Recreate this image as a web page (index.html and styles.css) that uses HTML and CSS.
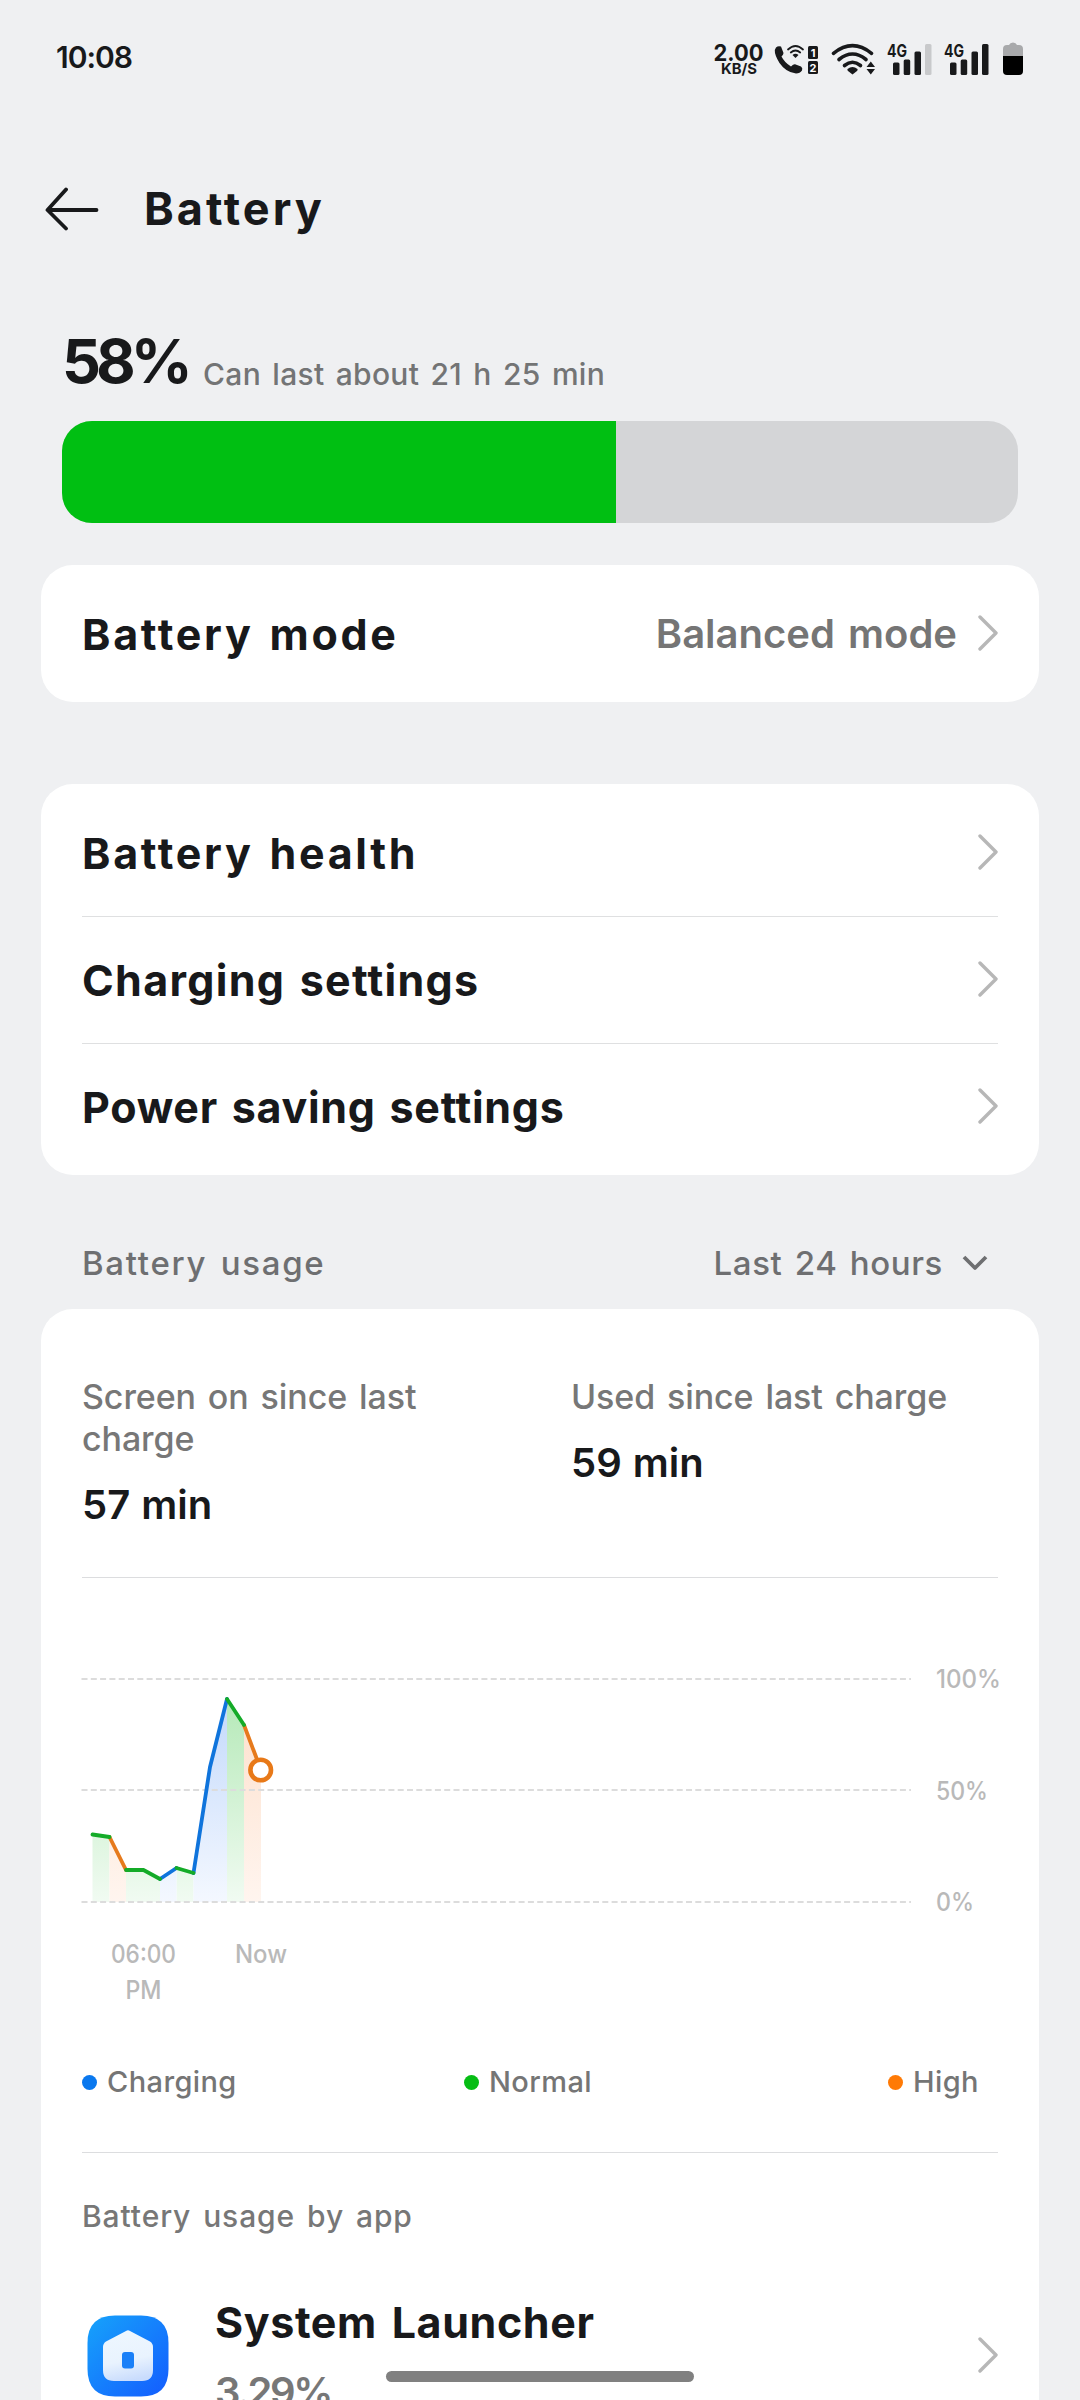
FILE: index.html
```html
<!DOCTYPE html>
<html lang="en">
<head>
    <meta charset="UTF-8">
    <meta name="viewport" content="width=device-width, initial-scale=1.0">
    <title>Battery</title>
    <link rel="stylesheet" href="styles.css">
</head>
<body>
    <div class="screen">
        <div class="status-bar">
            <div class="clock">10:08</div>
            <svg class="status-icons" width="320" height="40" viewBox="710 40 320 40" fill="#18191b">
                <!-- network speed -->
                <text x="738.5" y="60.5" class="speed" text-anchor="middle" textLength="50" lengthAdjust="spacingAndGlyphs">2.00</text>
                <text x="739" y="74" class="speed-unit" text-anchor="middle" textLength="36" lengthAdjust="spacingAndGlyphs">KB/S</text>
                <!-- wifi calling -->
                <path d="M776 47.500Q778 45.500 781 46.500L783.500 53Q783.500 54.500 781.500 56.500Q784.500 62.500 791 66.500Q793.500 64 795 64.300L801 66.500Q803 68 802 70.500Q800 73.500 796 73.500Q786 72.500 779.500 63Q774.500 55 774.800 50Z"/>
                <g fill="none" stroke="#18191b" stroke-width="1.800" stroke-linecap="round">
                    <path d="M788 49.500Q795.500 42.500 803 49.500"/>
                    <path d="M790.800 52.500Q795.500 48.500 800.200 52.500"/>
                </g>
                <path d="M792.500 55Q795.500 52.500 798.500 55L795.500 58Z"/>
                <rect x="808" y="46" width="10" height="13" rx="1.500"/>
                <rect x="808" y="61" width="10" height="13" rx="1.500"/>
                <text x="813" y="56.500" class="sim" text-anchor="middle">1</text>
                <text x="813" y="71.700" class="sim" text-anchor="middle">2</text>
                <!-- wifi -->
                <g fill="none" stroke="#18191b" stroke-width="3.600" stroke-linecap="round">
                    <path d="M833.500 53.300Q852.500 38 871.500 53.300"/>
                    <path d="M839 59.500Q852.500 48.500 866 59.500"/>
                    <path d="M844.500 65.500Q852.500 59 860.500 65.500"/>
                </g>
                <path d="M847.500 69Q852.500 65 857.500 69Q858 70 857 71L852.500 74.500L848 71Q847 70 847.500 69Z"/>
                <path d="M866.500 67L870.800 61.500L875 67ZM866.500 69L870.800 74.500L875 69Z"/>
                <!-- sim 1 signal -->
                <text x="887" y="57" class="net" textLength="20" lengthAdjust="spacingAndGlyphs">4G</text>
                <rect x="893" y="62.500" width="6.500" height="12.500" rx="1.500"/>
                <rect x="903.700" y="59.500" width="6.500" height="15.500" rx="1.500"/>
                <rect x="914.500" y="51.500" width="6.500" height="23.500" rx="1.500"/>
                <rect x="925" y="44" width="6.500" height="31" rx="1.500" fill="#c8c9cb"/>
                <!-- sim 2 signal -->
                <text x="944" y="57" class="net" textLength="20" lengthAdjust="spacingAndGlyphs">4G</text>
                <rect x="950" y="62.500" width="6.500" height="12.500" rx="1.500"/>
                <rect x="960.700" y="59.500" width="6.500" height="15.500" rx="1.500"/>
                <rect x="971.500" y="51.500" width="6.500" height="23.500" rx="1.500"/>
                <rect x="982" y="44" width="6.500" height="31" rx="1.500"/>
                <!-- battery -->
                <path d="M1003 56V49Q1003 45 1007 45H1009Q1010 42.500 1013 42.500Q1016 42.500 1017 45H1019Q1023 45 1023 49V56Z" fill="#a8a9ab"/>
                <path d="M1003 56H1023V71Q1023 75 1019 75H1007Q1003 75 1003 71Z" fill="#000"/>
            </svg>
        </div>

        <div class="header">
            <svg class="back" width="54" height="48" viewBox="0 0 54 48">
                <path d="M21 5.500L2.500 26L21 44.500M3 26H51.500"/>
            </svg>
            <h1>Battery</h1>
        </div>

        <div class="summary">
            <div class="level">
                <span class="percent">58%</span>
                <span class="remaining">Can last about 21 h 25 min</span>
            </div>
            <div class="meter"><div class="meter-fill" style="width: 58%"></div></div>
        </div>

        <div class="card mode-card">
            <div class="row">
                <span class="row-title">Battery mode</span>
                <span class="row-value">Balanced mode</span>
                <svg class="chevron" width="20" height="36" viewBox="0 0 20 36"><path d="M2 2L18 18L2 34"/></svg>
            </div>
        </div>

        <div class="card menu-card">
            <div class="row">
                <span class="row-title">Battery health</span>
                <svg class="chevron" width="20" height="36" viewBox="0 0 20 36"><path d="M2 2L18 18L2 34"/></svg>
            </div>
            <div class="row">
                <span class="row-title medium">Charging settings</span>
                <svg class="chevron" width="20" height="36" viewBox="0 0 20 36"><path d="M2 2L18 18L2 34"/></svg>
            </div>
            <div class="row">
                <span class="row-title tight">Power saving settings</span>
                <svg class="chevron" width="20" height="36" viewBox="0 0 20 36"><path d="M2 2L18 18L2 34"/></svg>
            </div>
        </div>

        <div class="section-head">
            <span class="section-title">Battery usage</span>
            <span class="range">Last 24 hours</span>
            <svg class="down" width="28" height="18" viewBox="0 0 28 18"><path d="M3 3L14 14L25 3"/></svg>
        </div>

        <div class="card usage-card">
            <div class="stats">
                <div class="stat">
                    <div class="stat-label">Screen on since last<br>charge</div>
                    <div class="stat-value">57 min</div>
                </div>
                <div class="stat">
                    <div class="stat-label">Used since last charge</div>
                    <div class="stat-value">59 min</div>
                </div>
            </div>

            <svg class="chart" width="924" height="484" viewBox="81 1578 924 484">
                <defs>
                    <linearGradient id="fillBlue" gradientUnits="userSpaceOnUse" x1="0" y1="1699" x2="0" y2="1902">
                        <stop offset="0" stop-color="#c3d9fb"/>
                        <stop offset="1" stop-color="#f4f8ff"/>
                    </linearGradient>
                    <linearGradient id="fillGreen" gradientUnits="userSpaceOnUse" x1="0" y1="1699" x2="0" y2="1902">
                        <stop offset="0" stop-color="#b5e9b8"/>
                        <stop offset="1" stop-color="#f1fbf2"/>
                    </linearGradient>
                    <linearGradient id="fillOrange" gradientUnits="userSpaceOnUse" x1="0" y1="1699" x2="0" y2="1902">
                        <stop offset="0" stop-color="#fde0cc"/>
                        <stop offset="1" stop-color="#fff5ef"/>
                    </linearGradient>
                </defs>
                <!-- area under the line -->
                <path fill="url(#fillGreen)" d="M92.500 1834.500L109.500 1837V1902H92.500ZM126 1870H143.500L160 1879V1902H126ZM176.500 1868L193.500 1873V1902H176.500ZM227 1699L244 1725V1902H227Z"/>
                <path fill="url(#fillOrange)" d="M109.500 1837L126 1870V1902H109.500ZM244 1725L261 1770V1902H244Z"/>
                <path fill="url(#fillBlue)" d="M160 1879L176.500 1868V1902H160ZM193.500 1873L210 1767L227 1699V1902H193.500Z"/>
                <g class="grid">
                    <path d="M81.500 1679H911"/>
                    <path d="M81.500 1790H911"/>
                    <path d="M81.500 1902H911"/>
                </g>
                <g class="line">
                    <path class="high" d="M109.500 1837L126 1870M244 1725L261 1770"/>
                    <path class="charging" d="M160 1879L176.500 1868M193.500 1873L210 1767L227 1699"/>
                    <path class="normal" d="M92.500 1834.500L109.500 1837M126 1870H143.500L160 1879M176.500 1868L193.500 1873M227 1699L244 1725"/>
                </g>
                <circle class="marker" cx="260.700" cy="1770" r="10.300"/>
                <g class="axis">
                    <text x="936" y="1687.500" textLength="65" lengthAdjust="spacingAndGlyphs">100%</text>
                    <text x="936" y="1799.500" textLength="52" lengthAdjust="spacingAndGlyphs">50%</text>
                    <text x="936" y="1910.500" textLength="38" lengthAdjust="spacingAndGlyphs">0%</text>
                    <text x="143.500" y="1962.500" text-anchor="middle" textLength="65" lengthAdjust="spacingAndGlyphs">06:00</text>
                    <text x="143.500" y="1998.500" text-anchor="middle" textLength="36" lengthAdjust="spacingAndGlyphs">PM</text>
                    <text x="261" y="1962.500" text-anchor="middle" textLength="52" lengthAdjust="spacingAndGlyphs">Now</text>
                </g>
            </svg>

            <div class="legend">
                <div class="legend-item"><i class="dot blue"></i>Charging</div>
                <div class="legend-item"><i class="dot green"></i>Normal</div>
                <div class="legend-item"><i class="dot orange"></i>High</div>
            </div>

            <div class="apps-title">Battery usage by app</div>

            <div class="app">
                <svg class="app-icon" width="82" height="82" viewBox="0 0 82 82">
                    <defs>
                        <linearGradient id="tile" x1="0" y1="0" x2="1" y2="1">
                            <stop offset="0" stop-color="#16a3fb"/>
                            <stop offset="1" stop-color="#145cfe"/>
                        </linearGradient>
                        <linearGradient id="house" x1="0.300" y1="0" x2="0.500" y2="1">
                            <stop offset="0" stop-color="#eef7ff"/>
                            <stop offset="0.600" stop-color="#e9f3fe"/>
                            <stop offset="1" stop-color="#c9dcfd"/>
                        </linearGradient>
                    </defs>
                    <path fill="url(#tile)" d="M28 .5H54Q81.500 .5 81.500 28V54Q81.500 81.500 54 81.500H28Q.5 81.500 .5 54V28Q.5 .5 28 .5Z"/>
                    <path fill="url(#house)" d="M39 16Q41 14.500 43 16L63 26.500Q66 28.500 66 32V55Q66 66 55 66H27Q16 66 16 55V32Q16 28.500 19 26.500Z"/>
                    <rect x="35" y="37" width="12" height="16.500" rx="3" fill="#1a80f8"/>
                </svg>
                <div class="app-text">
                    <div class="app-name">System Launcher</div>
                    <div class="app-usage">3.29%</div>
                </div>
                <svg class="chevron" width="20" height="36" viewBox="0 0 20 36"><path d="M2 2L18 18L2 34"/></svg>
            </div>
        </div>

        <div class="home-pill"></div>
    </div>
</body>
</html>
```
FILE: styles.css
```css
body {
    margin: 0;
    background: #eff0f2;
    font-family: Inter, "Liberation Sans", sans-serif;
    color: #18191b;
}
.screen {
    position: relative;
    width: 1080px;
    height: 2400px;
    overflow: hidden;
}
.status-bar {
    display: flex;
    justify-content: space-between;
    align-items: flex-start;
    height: 76px;
    padding: 40px 50px 0 56px;
}
.clock {
    font-size: 30px;
    line-height: 34px;
    font-weight: 600;
    letter-spacing: -1px;
}
.speed {
    font: bold 23px Inter, sans-serif;
}
.speed-unit {
    font: bold 14.5px Inter, sans-serif;
}
.sim {
    font: bold 11px Inter, sans-serif;
    fill: #fff;
}
.net {
    font: bold 17px Inter, sans-serif;
}
.header {
    display: flex;
    align-items: center;
    height: 184px;
    padding-left: 45px;
}
.back {
    fill: none;
    stroke: #18191b;
    stroke-width: 3.8;
    stroke-linecap: round;
    stroke-linejoin: round;
}
h1 {
    margin: 2px 0 0 45px;
    font-size: 45px;
    line-height: 54px;
    font-weight: 700;
    letter-spacing: 3px;
}
.summary {
    padding: 24px 62px 0;
}
.level {
    display: flex;
    align-items: flex-end;
    gap: 15px;
}
.percent {
    width: 126px;
    font-size: 61px;
    line-height: 74px;
    margin-bottom: -2px;
    font-weight: 700;
    letter-spacing: -5px;
}
.remaining {
    font-size: 30px;
    line-height: 44px;
    font-weight: 500;
    letter-spacing: 0.3px;
    word-spacing: 3px;
    color: #737475;
}
.meter {
    height: 102px;
    margin-top: 25px;
    border-radius: 30px;
    background: #d4d5d7;
    overflow: hidden;
}
.meter-fill {
    height: 100%;
    background: #00bf12;
}
.card {
    margin: 0 41px;
    padding: 0 41px;
    border-radius: 32px;
    background: #fff;
}
.mode-card {
    margin-top: 42px;
}
.mode-card .row {
    height: 137px;
}
.menu-card {
    margin-top: 82px;
    padding-top: 5px;
    padding-bottom: 5px;
}
.row {
    display: flex;
    align-items: center;
    height: 127px;
    box-sizing: border-box;
}
.menu-card .row + .row {
    border-top: 1px solid #dfe0e1;
}
.row-title {
    flex: 1;
    font-size: 43px;
    font-weight: 700;
    letter-spacing: 2.7px;
    word-spacing: 3px;
}
.row-title.medium {
    letter-spacing: 1.3px;
}
.row-title.tight {
    letter-spacing: 0.7px;
}
.row-value {
    margin-right: 21px;
    font-size: 40px;
    font-weight: 600;
    letter-spacing: 0;
    word-spacing: 3px;
    color: #757575;
}
.chevron {
    flex: none;
    position: relative;
    top: -1px;
    fill: none;
    stroke: #b7b7b7;
    stroke-width: 3.4;
    stroke-linecap: round;
    stroke-linejoin: round;
}
.section-head {
    display: flex;
    align-items: center;
    height: 44px;
    padding: 66px 91px 24px 82px;
    font-size: 33px;
    font-weight: 500;
    word-spacing: 3px;
    color: #6e6f71;
}
.section-title {
    flex: 1;
    letter-spacing: 1.7px;
}
.range {
    letter-spacing: 0.6px;
}
.down {
    margin-left: 18px;
    fill: none;
    stroke: #6e6f71;
    stroke-width: 3.8;
    stroke-linejoin: round;
}
.usage-card {
    height: 1200px;
}
.stats {
    display: grid;
    grid-template-columns: 489px 1fr;
    padding: 67px 0 48px;
    border-bottom: 1px solid #dcdddf;
}
.stat-label {
    font-size: 34px;
    line-height: 42px;
    font-weight: 500;
    letter-spacing: -0.1px;
    word-spacing: 3px;
    color: #777;
}
.stat-value {
    margin-top: 21px;
    font-size: 40px;
    line-height: 48px;
    font-weight: 600;
    word-spacing: 1px;
}
.chart {
    display: block;
    margin-left: -1px;
}
.grid path {
    fill: none;
    stroke: #dcdcdc;
    stroke-width: 2;
    stroke-dasharray: 6 3.3;
}
.line path {
    fill: none;
    stroke-width: 3.8;
    stroke-linecap: round;
    stroke-linejoin: round;
}
.line .charging {
    stroke: #0f74dc;
}
.line .normal {
    stroke: #14ab28;
}
.line .high {
    stroke: #e67a1c;
}
.marker {
    fill: #fff;
    stroke: #e87918;
    stroke-width: 4.6;
}
.axis text {
    font-size: 25px;
    font-weight: 500;
    fill: #b9b9b9;
}
.legend {
    display: grid;
    grid-template-columns: 382px 424px auto;
    padding-bottom: 50px;
    border-bottom: 1px solid #dcdddf;
}
.legend-item {
    display: flex;
    align-items: center;
    font-size: 29px;
    line-height: 40px;
    font-weight: 500;
    letter-spacing: 0.4px;
    color: #757575;
}
.dot {
    width: 15px;
    height: 15px;
    margin-right: 10px;
    border-radius: 50%;
}
.blue {
    background: #0a78ee;
}
.green {
    background: #06bd14;
}
.orange {
    background: #ff7a05;
}
.apps-title {
    margin-top: 43px;
    font-size: 30px;
    line-height: 40px;
    font-weight: 500;
    letter-spacing: 0.9px;
    word-spacing: 3px;
    color: #777;
}
.app {
    display: flex;
    align-items: center;
    height: 120px;
    margin-top: 60px;
}
.app-icon {
    margin-left: 5px;
}
.app-text {
    flex: 1;
    margin-left: 46px;
}
.app-name {
    font-size: 43px;
    line-height: 54px;
    font-weight: 700;
    letter-spacing: 0.6px;
    word-spacing: 4px;
}
.app-usage {
    margin-top: 18px;
    font-size: 40px;
    line-height: 50px;
    font-weight: 600;
    letter-spacing: -2.4px;
    color: #777;
}
.home-pill {
    position: absolute;
    left: 386px;
    top: 2371px;
    width: 308px;
    height: 11px;
    border-radius: 6px;
    background: #808080;
}
```
